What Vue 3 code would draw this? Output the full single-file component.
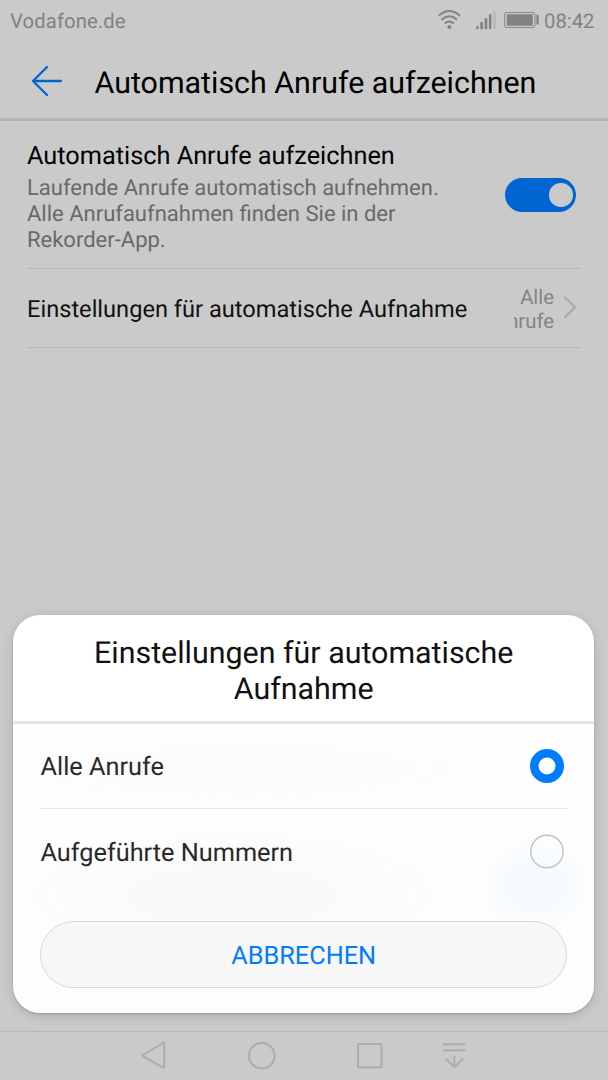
<script setup>
import { ref } from 'vue'

const recording = ref(true)
const selected = ref('all')
const options = [
  { id: 'all', label: 'Alle Anrufe' },
  { id: 'listed', label: 'Aufgeführte Nummern' },
]
</script>

<template>
  <div class="screen">
    <div class="status">
      <span class="carrier">Vodafone.de</span>
      <svg class="indicators" width="104" height="24" viewBox="0 0 104 24">
        <g fill="none" stroke="#828282" stroke-width="1.9" stroke-linecap="round">
          <path d="M4.3 6.2Q14.3 -2 24.3 6.2" />
          <path d="M7.2 10.3Q14.3 4.4 21.4 10.3" />
          <path d="M10.4 14.1Q14.3 11 18.2 14.1" />
        </g>
        <circle cx="14.3" cy="17.9" r="2" fill="#828282" />
        <g fill="#828282">
          <rect x="41" y="17" width="2.7" height="3.3" rx="1" />
          <rect x="45.3" y="13" width="2.7" height="7.3" rx="1" />
          <rect x="49.6" y="9" width="2.7" height="11.3" rx="1" />
          <rect x="53.9" y="5" width="2.5" height="15.3" rx="1" />
        </g>
        <rect x="58.2" y="2" width="2.5" height="18.3" rx="1" fill="#b8b8b8" />
        <rect x="69.7" y="3.5" width="30.2" height="15" rx="2.5" fill="none" stroke="#8c8c8c" stroke-width="1.1" />
        <rect x="71.8" y="5.3" width="26" height="11.4" rx=".7" fill="#828282" />
        <rect x="101.4" y="5.7" width="2.3" height="10" rx=".9" fill="#828282" />
      </svg>
      <span class="clock">08:42</span>
    </div>

    <header class="header">
      <svg class="back" width="34" height="34" viewBox="0 0 34 34" fill="none" stroke="#0065d0" stroke-width="2.3" stroke-linecap="round" stroke-linejoin="round">
        <path d="M17 4L3 18L17 32M3 18H31" />
      </svg>
      <h1>Automatisch Anrufe aufzeichnen</h1>
    </header>

    <main class="settings">
      <section class="row toggle-row">
        <div class="copy">
          <div class="name">Automatisch Anrufe aufzeichnen</div>
          <p>Laufende Anrufe automatisch aufnehmen.<br />Alle Anrufaufnahmen finden Sie in der<br />Rekorder-App.</p>
        </div>
        <div class="switch" :class="{ on: recording }"><i></i></div>
      </section>
      <section class="row link-row">
        <div class="label">Einstellungen für automatische Aufnahme</div>
        <div class="value"><span>Alle</span><span>Anrufe</span></div>
        <svg class="chevron" width="16" height="24" viewBox="0 0 16 24" fill="none" stroke="#aaa" stroke-width="2.2" stroke-linecap="round" stroke-linejoin="round">
          <path d="M3 1.5L13 11.3L3 21.1" />
        </svg>
      </section>
    </main>

    <div class="dialog">
      <h2>Einstellungen für automatische<br />Aufnahme</h2>
      <div class="options">
        <div v-for="o in options" :key="o.id" class="option">
          <span>{{ o.label }}</span>
          <svg class="radio" width="36" height="36" viewBox="0 0 36 36" fill="none">
            <circle v-if="selected === o.id" cx="18" cy="18" r="12.75" stroke="#007dff" stroke-width="8.5" />
            <circle v-else cx="18" cy="17.5" r="16.2" stroke="#c0c0c0" stroke-width="1.4" />
          </svg>
        </div>
      </div>
      <button class="cancel">ABBRECHEN</button>
    </div>

    <nav class="navbar">
      <svg width="608" height="48" viewBox="0 0 608 48" fill="none" stroke="#adadad" stroke-width="2.1" stroke-linejoin="round" stroke-linecap="round">
        <path d="M164.2 11.1V35.1Q164.2 36.2 163.2 35.6L143.2 24.5Q142 23.6 143.2 22.8L163.2 10.8Q164.2 10.3 164.2 11.1Z" />
        <circle cx="261.8" cy="23.7" r="12.8" />
        <rect x="358.1" y="12" width="23.4" height="23.4" rx="1" />
        <path d="M444 12.4H464.6M444 18.4H464.6M454.3 24.2V35.2M446 27.1L454.3 35.2L462.6 27.1" />
      </svg>
    </nav>
  </div>
</template>

<style>
body {
  margin: 0;
  background: #cacaca;
}
</style>

<style scoped>
.screen {
  position: relative;
  display: flex;
  flex-direction: column;
  width: 608px;
  height: 1080px;
  overflow: hidden;
  background: #cacaca;
  font-family: Roboto, "Liberation Sans", sans-serif;
  text-rendering: geometricPrecision;
  color: #000;
}
.status {
  display: flex;
  align-items: center;
  height: 42px;
  box-sizing: border-box;
  padding: 0 14px 0 10px;
  color: #828282;
  font-size: 20.3px;
}
.carrier { letter-spacing: 0.1px; }
.indicators { margin: 0 5.5px 0 auto; }
.clock { width: 50px; white-space: nowrap; }
.header {
  display: flex;
  align-items: center;
  height: 76px;
  padding: 0 0 0 29.5px;
  border-bottom: 3px solid #b4b4b4;
}
.back { flex: none; margin-right: 31px; }
h1, h2 { margin: 0; font-weight: 400; white-space: nowrap; }
h1 { font-size: 30.4px; line-height: 36px; padding-top: 7px; }
.settings { padding: 0 27px; }
.row {
  display: flex;
  border-bottom: 1.5px solid #b8b8b8;
  box-sizing: border-box;
}
.toggle-row { height: 148px; padding-top: 21px; }
.copy { flex: 1; }
.name { font-size: 25.3px; line-height: 30px; white-space: nowrap; }
.copy p {
  margin: 4px 0 0;
  color: #696969;
  font-size: 22px;
  line-height: 26px;
  white-space: nowrap;
}
.switch {
  flex: none;
  display: flex;
  align-items: center;
  width: 71px;
  height: 34px;
  box-sizing: border-box;
  margin: 36px 5px 0 0;
  padding: 0 3.5px;
  border-radius: 17px;
  background: #aaa;
}
.switch.on { justify-content: flex-end; background: #0065d0; }
.switch i { width: 23.5px; height: 23.5px; border-radius: 50%; background: #cacaca; }
.link-row { height: 79px; align-items: center; }
.label { color: #111; font-size: 23.62px; white-space: nowrap; padding-top: 2px; }
.value {
  display: flex;
  flex-direction: column;
  align-items: flex-end;
  width: 40px;
  margin-left: auto;
  padding-top: 1px;
  overflow: hidden;
  color: #838383;
  font-size: 20.3px;
  line-height: 24px;
}
.chevron { flex: none; margin: 0 3px 0 8px; }
.dialog {
  position: absolute;
  left: 13px;
  top: 615px;
  width: 581.4px;
  height: 398.4px;
  border-radius: 27px;
  background:
    radial-gradient(ellipse 56px 46px at 522px 270px, #f4faff 0 25%, rgba(244, 250, 255, 0) 100%),
    radial-gradient(ellipse 210px 65px at 220px 280px, #fafafa 0 50%, rgba(250, 250, 250, 0) 100%),
    radial-gradient(ellipse 220px 34px at 235px 154px, #fbfbfb 0 40%, rgba(251, 251, 251, 0) 100%),
    linear-gradient(#fff 0 100px, #fdfdfd 150px);
  box-shadow: 0 3px 12px rgba(0, 0, 0, 0.14), 0 1px 2px rgba(0, 0, 0, 0.16);
  overflow: hidden;
}
h2 {
  height: 109px;
  box-sizing: border-box;
  padding-top: 21px;
  border-bottom: 3px solid #e4e4e4;
  color: #111;
  font-size: 30.4px;
  line-height: 36px;
  text-align: center;
}
.options { padding: 0 27px 0 27.5px; }
.option {
  display: flex;
  align-items: center;
  justify-content: space-between;
  height: 85px;
  box-sizing: border-box;
  padding-right: 2.5px;
  color: #292929;
  font-size: 25.3px;
}
.option span { padding-top: 3px; }
.option:first-child { border-bottom: 1.5px solid #e6e6e6; }
.radio { flex: none; }
.cancel {
  display: block;
  width: 527px;
  height: 67px;
  margin: 27px auto 0;
  padding: 4px 0 0;
  border: 1px solid #d8d8d8;
  border-radius: 34px;
  background: #f7f7f7;
  color: #007dff;
  font: 25.3px Roboto, "Liberation Sans", sans-serif;
  text-rendering: geometricPrecision;
}
.navbar {
  margin-top: auto;
  height: 48px;
  border-top: 1.5px solid #b8b8b8;
}
</style>
